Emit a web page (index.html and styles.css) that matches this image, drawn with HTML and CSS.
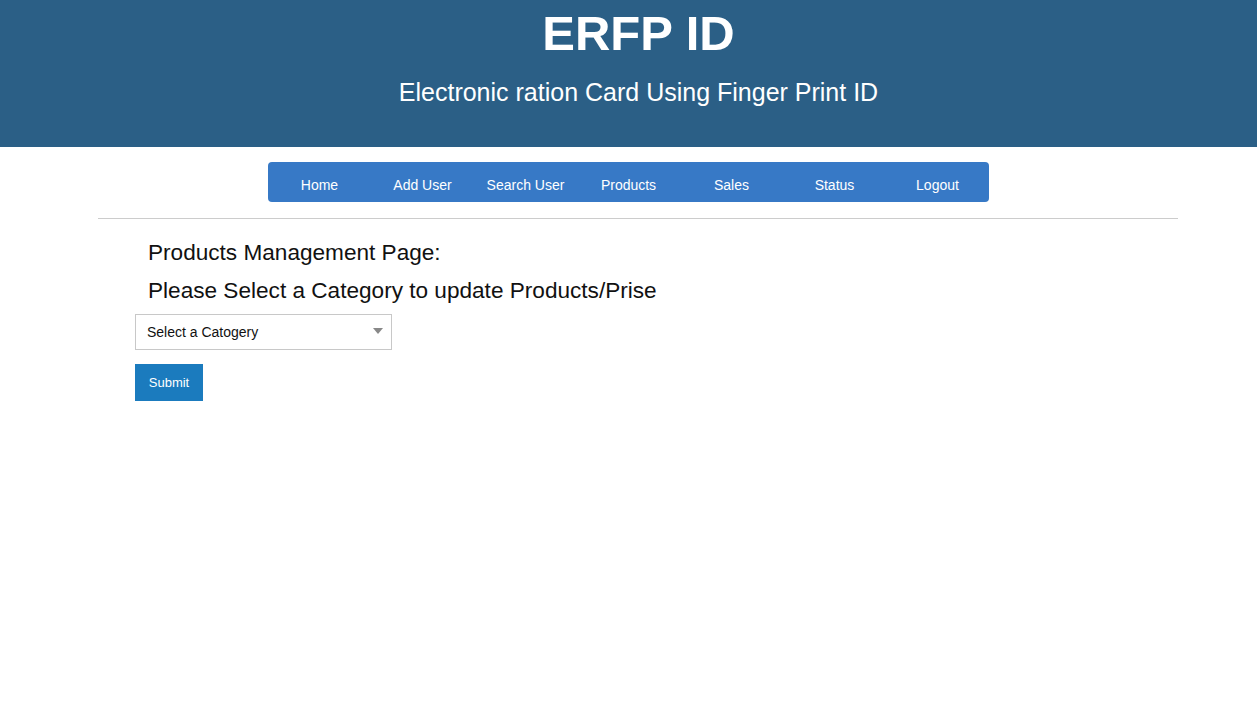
FILE: index.html
```html
<!DOCTYPE html>
<html>
<head>
<meta charset="utf-8">
<link rel="stylesheet" href="styles.css">
</head>
<body>
<header class="top">
  <h1 class="brand">ERFP ID</h1>
  <p class="tagline">Electronic ration Card Using Finger Print ID</p>
</header>
<nav class="menu">
  <a href="#">Home</a>
  <a href="#">Add User</a>
  <a href="#">Search User</a>
  <a href="#">Products</a>
  <a href="#">Sales</a>
  <a href="#">Status</a>
  <a href="#">Logout</a>
</nav>
<hr class="rule">
<main class="content">
  <h2 class="heading">Products Management Page:</h2>
  <h2 class="heading">Please Select a Category to update Products/Prise</h2>
  <form class="form">
    <div class="select">
      <span>Select a Catogery</span>
      <span class="caret"></span>
    </div>
    <button type="button" class="submit">Submit</button>
  </form>
</main>
</body>
</html>
```
FILE: styles.css
```css
* { box-sizing: border-box; }
html, body { margin: 0; padding: 0; background: #fff; }
body { font-family: "Liberation Sans", Arial, sans-serif; color: #111; }
.top {
  background: #2b5f86;
  height: 147px;
  padding: 7px 0 0 20px;
  text-align: center;
  color: #fff;
}
.brand {
  margin: 0;
  font-size: 49px;
  font-weight: bold;
  line-height: 52px;
}
.tagline {
  margin: 18px 0 0;
  font-size: 25px;
  line-height: 30px;
}
.menu {
  width: 721px;
  height: 40px;
  margin: 15px auto 0;
  background: #3779c6;
  border-radius: 4px;
  display: grid;
  grid-template-columns: repeat(7, 1fr);
  align-items: center;
  padding-top: 5px;
}
.menu a {
  color: #fff;
  text-decoration: none;
  font-size: 14px;
  text-align: center;
}
.rule {
  margin: 16px 79px 0 98px;
  border: 0;
  border-top: 1px solid #ccc;
  height: 0;
}
.content { padding: 21px 0 0 135px; }
.heading {
  margin: 0 0 12px 13px;
  font-size: 22.6px;
  font-weight: normal;
  line-height: 26px;
  color: #111;
}
.form { display: flex; flex-direction: column; align-items: flex-start; gap: 14px; margin-top: -2px; }
.select {
  width: 257px;
  height: 36px;
  border: 1px solid #c8c8c8;
  display: flex;
  align-items: center;
  justify-content: space-between;
  padding: 0 8px 0 11px;
  font-size: 14px;
  color: #111;
}
.caret {
  width: 0; height: 0;
  border-left: 5px solid transparent;
  border-right: 5px solid transparent;
  border-top: 6px solid #888;
  margin-bottom: 2px;
}
.submit {
  width: 68px;
  height: 37px;
  background: #1b7bbe;
  color: #fff;
  border: 0;
  font-family: inherit;
  font-size: 13px;
  padding: 0;
}
```
